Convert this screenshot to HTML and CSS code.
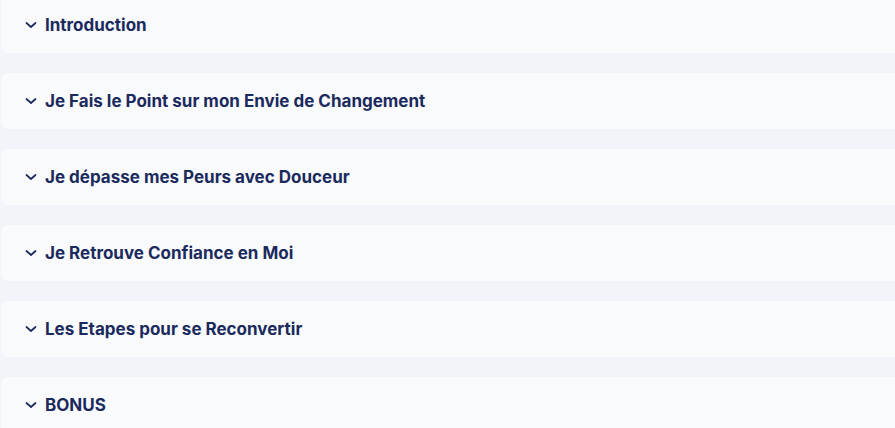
FILE: index.html
```html
<!DOCTYPE html>
<html lang="fr">
<head>
<meta charset="utf-8">
<link rel="stylesheet" href="styles.css">
</head>
<body>
<div class="list">
  <div class="item"><svg class="chev" viewBox="0 0 12 8"><path d="M1.5 2 L6 6 L10.5 2"/></svg><span class="title">Introduction</span></div>
  <div class="item"><svg class="chev" viewBox="0 0 12 8"><path d="M1.5 2 L6 6 L10.5 2"/></svg><span class="title">Je Fais le Point sur mon Envie de Changement</span></div>
  <div class="item"><svg class="chev" viewBox="0 0 12 8"><path d="M1.5 2 L6 6 L10.5 2"/></svg><span class="title">Je dépasse mes Peurs avec Douceur</span></div>
  <div class="item"><svg class="chev" viewBox="0 0 12 8"><path d="M1.5 2 L6 6 L10.5 2"/></svg><span class="title">Je Retrouve Confiance en Moi</span></div>
  <div class="item"><svg class="chev" viewBox="0 0 12 8"><path d="M1.5 2 L6 6 L10.5 2"/></svg><span class="title">Les Etapes pour se Reconvertir</span></div>
  <div class="item"><svg class="chev" viewBox="0 0 12 8"><path d="M1.5 2 L6 6 L10.5 2"/></svg><span class="title">BONUS</span></div>
</div>
</body>
</html>
```
FILE: styles.css
```css
html, body { margin: 0; padding: 0; }
body {
  background: #f1f4f8;
  font-family: Inter, "Noto Sans", sans-serif;
  overflow: hidden;
  width: 895px;
  height: 428px;
}
.list {
  display: flex;
  flex-direction: column;
  gap: 20px;
  margin-top: -3px;
  padding-left: 1px;
  width: 920px;
}
.item {
  height: 56px;
  background: #f9fafc;
  border-radius: 7px;
  display: flex;
  align-items: center;
  padding-left: 24px;
  box-sizing: border-box;
}
.chev {
  width: 12px;
  height: 8px;
  fill: none;
  stroke: #1b2a5c;
  stroke-width: 1.7;
  stroke-linecap: round;
  stroke-linejoin: round;
  margin-right: 8px;
}
.title {
  font-size: 17px;
  font-weight: 700;
  color: #1b2a5c;
}
```
